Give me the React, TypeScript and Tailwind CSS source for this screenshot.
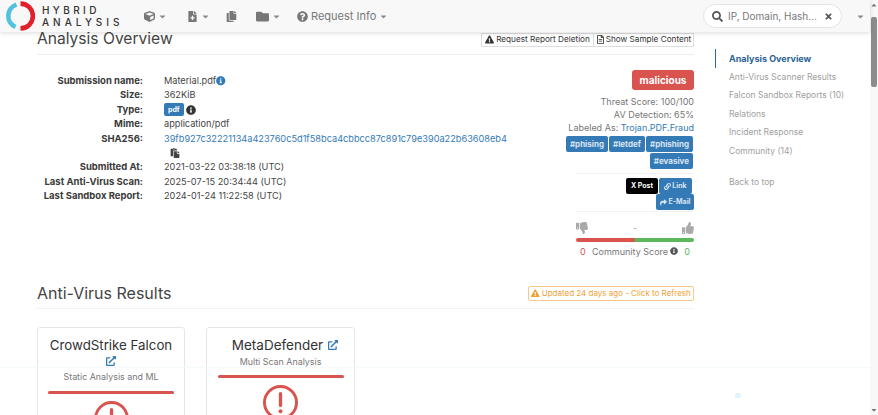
import {
  FaCube, FaFileMedical, FaCopy, FaFolder, FaQuestionCircle, FaSearch, FaTimes,
  FaExclamationTriangle, FaInfoCircle, FaRegFileAlt, FaLink, FaShare, FaThumbsUp, FaThumbsDown,
  FaCaretDown, FaCaretUp, FaPaste, FaExternalLinkAlt,
} from 'react-icons/fa';

const details = [
  { label: 'Submission name:', value: 'Material.pdf' },
  { label: 'Size:', value: '362KiB' },
  { label: 'Type:', value: 'pdf' },
  { label: 'Mime:', value: 'application/pdf' },
  { label: 'SHA256:', value: '39fb927c32221134a423760c5d1f58bca4cbbcc87c891c79e390a22b63608eb4' },
  { label: '', value: '' },
  { label: 'Submitted At:', value: '2021-03-22 03:38:18 (UTC)' },
  { label: 'Last Anti-Virus Scan:', value: '2025-07-15 20:34:44 (UTC)' },
  { label: 'Last Sandbox Report:', value: '2024-01-24 11:22:58 (UTC)' },
];

const sideLinks = [
  'Anti-Virus Scanner Results',
  'Falcon Sandbox Reports (10)',
  'Relations',
  'Incident Response',
  'Community (14)',
];

function Caret() {
  return <FaCaretDown className="text-[9px] text-[#888]" />;
}

function Logo() {
  return (
    <svg width="30" height="30" viewBox="0 0 30 30" className="shrink-0">
      <path d="M11.5 3.6 A12 12 0 0 0 10.5 26" fill="none" stroke="#4fc3dc" strokeWidth="4.6" />
      <path d="M15.5 2.6 A12.4 12.4 0 0 1 15.5 27.4" fill="none" stroke="#e3202a" strokeWidth="4.6" />
    </svg>
  );
}

function Tag({ children }: { children: string }) {
  return (
    <span className="bg-[#337ab7] text-white/80 font-bold text-[8px] h-[16px] px-[4px] rounded-[2px] flex items-center">
      {children}
    </span>
  );
}

function AlertCircle({ size }: { size: number }) {
  return (
    <svg width={size} height={size} viewBox="0 0 36 36" className="shrink-0">
      <circle cx="18" cy="18" r="16.5" fill="none" stroke="#d9534f" strokeWidth="3" />
      <path d="M18 9 V21" stroke="#d9534f" strokeWidth="3.4" strokeLinecap="round" />
      <circle cx="18" cy="27" r="2" fill="#d9534f" />
    </svg>
  );
}

export default function App() {
  return (
    <div className="relative flex h-[415px] w-[878px] overflow-hidden bg-white text-[#555] font-['Inter','Liberation_Sans',sans-serif]">
      <div className="relative w-[870px] shrink-0">
        {/* Top nav */}
        <header className="flex items-center h-[32px] bg-[#f8f8f8] shadow-[0_1px_5px_rgba(0,0,0,0.15)] text-[#777] relative z-10">
          <div className="flex items-center w-[144px] pl-[5px]">
            <Logo />
            <div className="ml-[7px] text-[#333] font-medium text-[10px] leading-[12px]">
              <div className="tracking-[3.4px]">HYBRID</div>
              <div className="tracking-[4px]">ANALYSIS</div>
            </div>
          </div>
          <div className="flex items-center gap-[3px] w-[43px] text-[11px]"><FaCube /><Caret /></div>
          <div className="flex items-center gap-[3px] w-[39px] text-[11px]"><FaFileMedical /><Caret /></div>
          <div className="w-[30px] text-[11px]"><FaCopy /></div>
          <div className="flex items-center gap-[3px] w-[41px] text-[13px]"><FaFolder /><Caret /></div>
          <div className="flex items-center gap-[3px] text-[11px]">
            <FaQuestionCircle className="text-[11px]" />
            <span>Request Info</span>
            <Caret />
          </div>
          <div className="ml-auto mr-[5px] flex items-center gap-[14px]">
            <div className="flex items-center w-[139px] h-[24px] rounded-full bg-white border border-[#e4e4e4] px-[8px]">
              <FaSearch className="text-[11px] text-[#555]" />
              <span className="ml-[5px] text-[10px] text-[#777]">IP, Domain, Hash...</span>
              <FaTimes className="ml-auto text-[9px] text-[#555]" />
            </div>
            <Caret />
          </div>
        </header>

        <div className="flex">
          <main className="w-[657px] ml-[37px] shrink-0">
            {/* Analysis overview */}
            <div className="flex items-center justify-between h-[22px]">
              <h2 className="text-[15.6px] leading-none text-[#444] -mt-[9px]">Analysis Overview</h2>
              <div className="flex -mt-[7px] text-[8.2px] text-[#333] whitespace-nowrap">
                <span className="flex items-center justify-center gap-[2px] h-[14px] w-[113px] border border-[#ddd]">
                  <FaExclamationTriangle className="text-[9px]" />Request Report Deletion
                </span>
                <span className="flex items-center justify-center gap-[1px] h-[14px] w-[100px] border border-l-0 border-[#ddd]">
                  <FaRegFileAlt className="text-[9px]" />Show Sample Content
                </span>
              </div>
            </div>
            <div className="h-px bg-[#eee]" />

            <div className="flex justify-between h-[228px]">
              <div className="grid grid-cols-[106px_1fr] gap-x-[21px] auto-rows-[14.4px] pt-[19px] text-[9.2px] leading-[14.4px]">
                {details.map((row, i) => (
                  <div key={i} className="contents">
                    <div className="text-right font-bold text-[9.5px] text-[#3a3a3a] whitespace-nowrap">{row.label}</div>
                    <div className="flex items-center whitespace-nowrap text-[#444]">
                      {row.label === 'Submission name:' && (
                        <>{row.value}<FaInfoCircle className="text-[9.5px] text-[#337ab7]" /></>
                      )}
                      {row.label === 'Type:' && (
                        <>
                          <span className="bg-[#337ab7] text-white font-bold text-[7px] rounded-[2px] px-[4px] h-[13px] flex items-center">pdf</span>
                          <FaInfoCircle className="ml-[2px] text-[10px] text-[#333]" />
                        </>
                      )}
                      {row.label === 'SHA256:' && <span className="text-[#337ab7]">{row.value}</span>}
                      {row.label === '' && <FaPaste className="ml-[6px] text-[10px] text-[#444]" />}
                      {!['Submission name:', 'Type:', 'SHA256:', ''].includes(row.label) && row.value}
                    </div>
                  </div>
                ))}
              </div>

              {/* Verdict */}
              <div className="w-[118px] flex flex-col items-end pt-[15px] text-[9px] text-[#777]">
                <span className="bg-[#d9534f] text-white font-bold text-[10px] h-[20px] w-[62px] rounded-[3px] flex items-center justify-center">malicious</span>
                <div className="mt-[5px] leading-[13px] text-right whitespace-nowrap">
                  <div>Threat Score: 100/100</div>
                  <div>AV Detection: 65%</div>
                  <div>Labeled As: <span className="text-[#337ab7]">Trojan.PDF.Fraud</span></div>
                </div>
                <div className="flex flex-wrap justify-end gap-x-[1px] gap-y-[1px] w-[140px] mt-[2px] pr-[1px]">
                  <Tag>#phising</Tag>
                  <Tag>#letdef</Tag>
                  <Tag>#phishing</Tag>
                  <Tag>#evasive</Tag>
                </div>
                <div className="w-full h-px bg-[#f2f2f2] mt-[4px]" />
                <div className="flex mt-[4px] pr-[2px]">
                  <span className="bg-black text-white font-bold text-[7px] h-[16px] w-[32px] rounded-[2px] flex items-center justify-center">X Post</span>
                  <span className="ml-[1px] bg-[#337ab7] text-white/80 font-bold text-[7px] h-[16px] w-[33px] rounded-[2px] flex items-center justify-center gap-[1px]"><FaLink />Link</span>
                </div>
                <span className="bg-[#337ab7] text-white/80 font-bold text-[7px] h-[16px] w-[38px] rounded-[2px] flex items-center justify-center gap-[2px]"><FaShare />E-Mail</span>
                <div className="w-full h-px bg-[#f2f2f2] mt-[1px]" />
                <div className="flex items-center justify-between w-full mt-[9px] text-[#aaa] text-[12px]">
                  <FaThumbsDown />
                  <span className="text-[9px]">-</span>
                  <FaThumbsUp />
                </div>
                <div className="flex w-full h-[4px] mt-[3px] rounded-full overflow-hidden">
                  <div className="w-1/2 bg-[#d9534f]" />
                  <div className="w-1/2 bg-[#5cb85c]" />
                </div>
                <div className="flex items-center justify-between w-full mt-[3px] px-[4px]">
                  <span className="text-[#d9534f]">0</span>
                  <span className="flex items-center gap-[2px] text-[#777]">Community Score<FaInfoCircle className="text-[8px] text-[#555]" /></span>
                  <span className="text-[#5cb85c]">0</span>
                </div>
              </div>
            </div>

            {/* Anti-virus results */}
            <div className="flex items-center justify-between h-[20px]">
              <h2 className="text-[16px] leading-none text-[#444]">Anti-Virus Results</h2>
              <span className="flex items-center gap-[2px] h-[15px] w-[166px] justify-center rounded-[2px] border border-[#f5c988] text-[#eea236] text-[8px]">
                <FaExclamationTriangle className="text-[8.5px]" />Updated 24 days ago - Click to Refresh
              </span>
            </div>
            <div className="h-px bg-[#f2f2f2] mt-[5px]" />

            <div className="flex gap-[21px] mt-[18px]">
              <div className="w-[148px] h-[120px] border border-[#e6e6e6] rounded-[3px] flex flex-col items-center pt-[9px] px-[10px] shrink-0">
                <div className="text-[13.3px] leading-[16px] text-[#333] whitespace-nowrap">CrowdStrike Falcon</div>
                <FaExternalLinkAlt className="mt-[3px] text-[10px] text-[#337ab7]" />
                <div className="mt-[5px] text-[8.9px] leading-[12px] text-[#777]">Static Analysis and ML</div>
                <div className="w-[126px] h-[3px] bg-[#d9534f] rounded-full mt-[8px]" />
                <div className="mt-[7px]"><AlertCircle size={35} /></div>
              </div>
              <div className="w-[149px] h-[120px] border border-[#e6e6e6] rounded-[3px] flex flex-col items-center pt-[9px] px-[10px] shrink-0">
                <div className="flex items-center gap-[5px] pl-[9px] text-[13.5px] leading-[16px] text-[#333]">MetaDefender<FaExternalLinkAlt className="text-[10px] text-[#337ab7]" /></div>
                <div className="mt-[3px] text-[8.9px] leading-[12px] text-[#777]">Multi Scan Analysis</div>
                <div className="w-[126px] h-[3px] bg-[#d9534f] rounded-full mt-[7px]" />
                <div className="mt-[7px]"><AlertCircle size={35} /></div>
              </div>
            </div>
          </main>

          {/* Side nav */}
          <aside className="ml-[21px] mt-[18px] text-[8.5px] text-[#a0a0a0] whitespace-nowrap">
            <div className="border-l border-[#2a6a8f] pl-[13px] h-[19px] -mt-[1px] flex items-center font-bold text-[9px] text-[#2a6496]">Analysis Overview</div>
            {sideLinks.map((link) => (
              <div key={link} className="pl-[14px] h-[18.5px] flex items-center">{link}</div>
            ))}
            <div className="pl-[14px] mt-[15px]">Back to top</div>
          </aside>
        </div>

        {/* Faint line of the banner across the bottom of the window */}
        <div className="absolute left-0 right-0 bottom-0 h-[48px] border-t border-[#f3fafb]">
          <span className="absolute left-[735px] top-[25px] w-[6px] h-[5px] rounded-[2px] bg-[#def5fb]" />
        </div>
      </div>

      {/* Window scrollbar */}
      <div className="w-[8px] shrink-0 bg-[#f8f8f8] flex flex-col items-center text-[#777]">
        <FaCaretUp className="text-[8px] mt-[1px] shrink-0" />
        <div className="w-[6px] h-[70px] bg-[#8c8c8c] rounded-[2px] mt-[8px]" />
        <FaCaretDown className="text-[8px] mt-auto mb-[1px] shrink-0" />
      </div>
    </div>
  );
}
